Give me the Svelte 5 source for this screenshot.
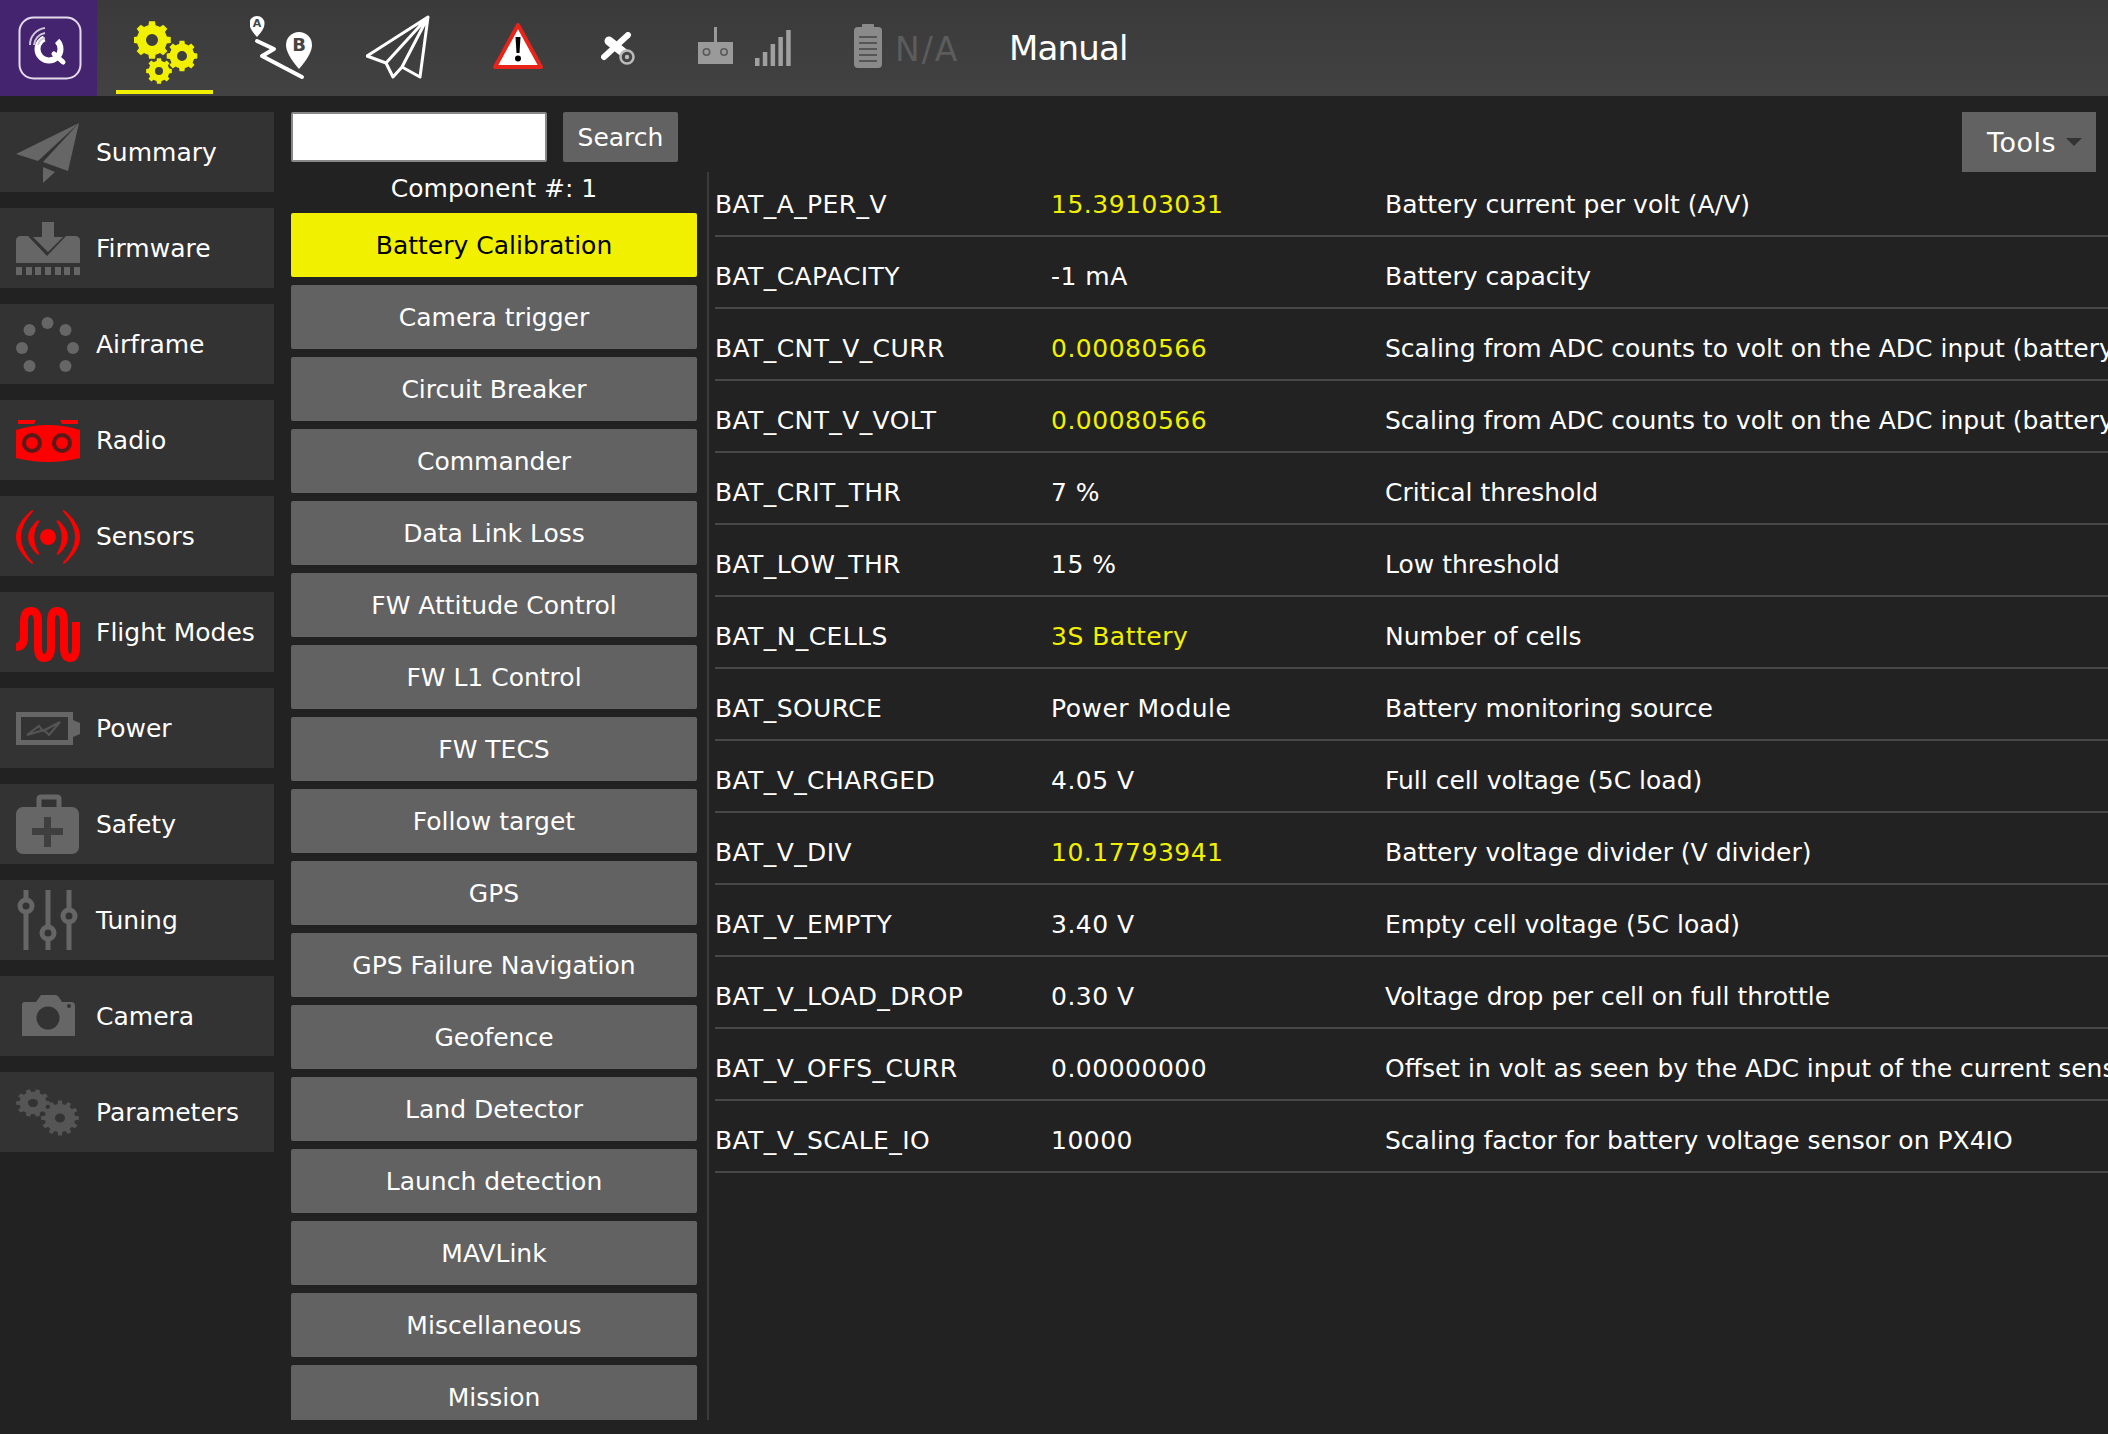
<script>
	function gear(cx, cy, r, teeth, hole) {
		const inner = r * 0.8;
		const step = (Math.PI * 2) / teeth;
		let d = '';
		for (let i = 0; i < teeth; i++) {
			const a = i * step;
			const pts = [
				[inner, a - step * 0.5],
				[inner, a - step * 0.3],
				[r, a - step * 0.2],
				[r, a + step * 0.2],
				[inner, a + step * 0.3]
			];
			for (const [rad, t] of pts) {
				d += `${d ? 'L' : 'M'}${(cx + rad * Math.cos(t)).toFixed(2)},${(cy + rad * Math.sin(t)).toFixed(2)}`;
			}
		}
		d += 'Z';
		const h = hole;
		d += `M${cx - h},${cy}a${h},${h} 0 1,0 ${h * 2},0a${h},${h} 0 1,0 ${-h * 2},0Z`;
		return d;
	}

	const nav = [
		{ label: 'Summary', icon: 'plane' },
		{ label: 'Firmware', icon: 'firmware' },
		{ label: 'Airframe', icon: 'airframe' },
		{ label: 'Radio', icon: 'radio' },
		{ label: 'Sensors', icon: 'sensors' },
		{ label: 'Flight Modes', icon: 'modes' },
		{ label: 'Power', icon: 'power' },
		{ label: 'Safety', icon: 'safety' },
		{ label: 'Tuning', icon: 'tuning' },
		{ label: 'Camera', icon: 'camera' },
		{ label: 'Parameters', icon: 'params' }
	];

	const groups = [
		'Battery Calibration',
		'Camera trigger',
		'Circuit Breaker',
		'Commander',
		'Data Link Loss',
		'FW Attitude Control',
		'FW L1 Control',
		'FW TECS',
		'Follow target',
		'GPS',
		'GPS Failure Navigation',
		'Geofence',
		'Land Detector',
		'Launch detection',
		'MAVLink',
		'Miscellaneous',
		'Mission'
	];

	const params = [
		{ name: 'BAT_A_PER_V', value: '15.39103031', changed: true, desc: 'Battery current per volt (A/V)' },
		{ name: 'BAT_CAPACITY', value: '-1 mA', desc: 'Battery capacity' },
		{ name: 'BAT_CNT_V_CURR', value: '0.00080566', changed: true, desc: 'Scaling from ADC counts to volt on the ADC input (battery current)' },
		{ name: 'BAT_CNT_V_VOLT', value: '0.00080566', changed: true, desc: 'Scaling from ADC counts to volt on the ADC input (battery voltage)' },
		{ name: 'BAT_CRIT_THR', value: '7 %', desc: 'Critical threshold' },
		{ name: 'BAT_LOW_THR', value: '15 %', desc: 'Low threshold' },
		{ name: 'BAT_N_CELLS', value: '3S Battery', changed: true, desc: 'Number of cells' },
		{ name: 'BAT_SOURCE', value: 'Power Module', desc: 'Battery monitoring source' },
		{ name: 'BAT_V_CHARGED', value: '4.05 V', desc: 'Full cell voltage (5C load)' },
		{ name: 'BAT_V_DIV', value: '10.17793941', changed: true, desc: 'Battery voltage divider (V divider)' },
		{ name: 'BAT_V_EMPTY', value: '3.40 V', desc: 'Empty cell voltage (5C load)' },
		{ name: 'BAT_V_LOAD_DROP', value: '0.30 V', desc: 'Voltage drop per cell on full throttle' },
		{ name: 'BAT_V_OFFS_CURR', value: '0.00000000', desc: 'Offset in volt as seen by the ADC input of the current sensor' },
		{ name: 'BAT_V_SCALE_IO', value: '10000', desc: 'Scaling factor for battery voltage sensor on PX4IO' }
	];
</script>

<div class="app">
	<header class="toolbar">
		<div class="logo">
			<svg width="64" height="64" viewBox="0 0 64 64">
				<rect x="1.5" y="1.5" width="61" height="61" rx="14" fill="none" stroke="#e4dcee" stroke-width="2" />
				<circle cx="31" cy="33" r="11.5" fill="none" stroke="#fff" stroke-width="6" stroke-dasharray="58 14" transform="rotate(-45 31 33)" />
				<path d="M36,38 L45,46" stroke="#fff" stroke-width="5" stroke-linecap="round" />
				<path d="M12,29 A17,17 0 0 1 27,12 M16,29 A13,13 0 0 1 27,17 M20,29 A9,9 0 0 1 27,22" fill="none" stroke="#cfc6da" stroke-width="2" />
			</svg>
		</div>

		<button class="tab active" aria-label="Vehicle setup">
			<svg width="64" height="64" viewBox="0 0 64 64">
				<path fill-rule="evenodd" fill="#f0f000" d={gear(18, 19, 19, 8, 6)} />
				<path fill-rule="evenodd" fill="#f0f000" d={gear(48, 35, 15.5, 8, 5)} />
				<path fill-rule="evenodd" fill="#f0f000" d={gear(25, 50, 13, 8, 4)} />
			</svg>
		</button>

		<svg class="route" width="64" height="66" viewBox="0 0 64 66">
			<path fill="#fff" d="M7,1 a7.5,7.5 0 0 1 7.5,8 q0,5 -7.5,13 q-7.5,-8 -7.5,-13 a7.5,7.5 0 0 1 7.5,-8Z" />
			<text x="7" y="12" class="pin-small">A</text>
			<path fill="#fff" d="M49,17 a13,13 0 0 1 13,13 q0,9 -13,24 q-13,-15 -13,-24 a13,13 0 0 1 13,-13Z" />
			<text x="49" y="36" class="pin-big">B</text>
			<path d="M7,26 L24,34 L12,41 L52,62" fill="none" stroke="#fff" stroke-width="4" stroke-linecap="round" stroke-linejoin="round" />
		</svg>

		<svg class="paper" width="64" height="66" viewBox="0 0 64 66">
			<path d="M62,2 L1,41 L20,48 L27,62 L36,52 L54,62 Z M20,48 L62,2 M36,52 L62,2" fill="none" stroke="#fff" stroke-width="3" stroke-linejoin="round" />
		</svg>

		<svg class="warn" width="52" height="48" viewBox="0 0 52 48">
			<path d="M26,3 L49,45 H3 Z" fill="#fff" stroke="#e8241a" stroke-width="4" stroke-linejoin="round" />
			<path d="M23.5,15 H28.5 L27.5,31 H24.5 Z" fill="#000" />
			<circle cx="26" cy="36.5" r="3" fill="#000" />
		</svg>

		<svg class="sat" width="36" height="36" viewBox="0 0 36 36">
			<path d="M3,25 L27,3" stroke="#fff" stroke-width="6" stroke-linecap="round" />
			<path d="M8,9 L23,21" stroke="#fff" stroke-width="9" stroke-linecap="round" />
			<circle cx="26" cy="25" r="6.5" fill="#444" stroke="#bbb" stroke-width="2.5" />
			<circle cx="26" cy="25" r="2.2" fill="#bbb" />
		</svg>

		<svg class="rc" width="35" height="37" viewBox="0 0 35 37">
			<rect x="16" y="0" width="3" height="15" fill="#9a9a9a" />
			<rect x="0" y="15" width="35" height="22" fill="#9a9a9a" />
			<circle cx="8.5" cy="25" r="3.2" fill="none" stroke="#5a5a5a" stroke-width="1.6" />
			<circle cx="26" cy="25" r="3.2" fill="none" stroke="#5a5a5a" stroke-width="1.6" />
		</svg>

		<svg class="signal" width="37" height="36" viewBox="0 0 37 36">
			<rect x="0" y="28" width="4.5" height="8" fill="#a0a0a0" />
			<rect x="7.8" y="22" width="4.5" height="14" fill="#a0a0a0" />
			<rect x="15.6" y="14" width="4.5" height="22" fill="#a0a0a0" />
			<rect x="23.4" y="7" width="4.5" height="29" fill="#a0a0a0" />
			<rect x="31.2" y="0" width="4.5" height="36" fill="#a0a0a0" />
		</svg>

		<svg class="battery" width="28" height="44" viewBox="0 0 28 44">
			<rect x="8" y="0" width="12" height="5" rx="1" fill="#8a8a8a" />
			<rect x="0" y="3" width="28" height="41" rx="4" fill="#8a8a8a" />
			<path d="M5,13 H23 M5,19 H23 M5,25 H23 M5,31 H23 M5,37 H23" stroke="#555" stroke-width="2" />
		</svg>
		<span class="na">N/A</span>
		<span class="mode">Manual</span>
	</header>

	<div class="body">
		<nav class="sidebar">
			{#each nav as item}
				<div class="nav-item">
					<svg class="nav-icon" width="64" height="64" viewBox="0 0 64 64">
						{#if item.icon === 'plane'}
							<g fill="#666">
								<path d="M0,34 L63,3 L22,41 Z" />
								<path d="M27,42 L63,3 L52,51 Z" />
								<path d="M27,47 L39,52 L27,63 Z" />
							</g>
						{:else if item.icon === 'firmware'}
							<g fill="#666">
								<path d="M0,25 Q0,20 5,20 H12 L31,40 L50,20 H59 Q64,20 64,25 V47 H0 Z" />
								<path d="M26,6 H38 V21 H47 L32,36 L17,21 H26 Z" />
								<path d="M0,51 H6 V59 H0 Z M10,51 H16 V59 H10 Z M19,51 H25 V59 H19 Z M29,51 H35 V59 H29 Z M39,51 H45 V59 H39 Z M48,51 H54 V59 H48 Z M58,51 H64 V59 H58 Z" />
							</g>
						{:else if item.icon === 'airframe'}
							<g fill="#666">
								<circle cx="31.5" cy="11" r="6" />
								<circle cx="13.5" cy="18" r="6" />
								<circle cx="49.5" cy="18" r="6" />
								<circle cx="6" cy="36" r="6" />
								<circle cx="57" cy="36" r="6" />
								<circle cx="13.5" cy="54" r="6" />
								<circle cx="49.5" cy="54" r="6" />
							</g>
						{:else if item.icon === 'radio'}
							<path fill="#f00" d="M2,12 H20 L18,16 H2 Z M44,12 H62 V16 H46 Z" />
							<path fill="#f00" d="M0,22 Q32,12 64,22 V50 Q32,58 0,50 Z" />
							<circle cx="16" cy="35" r="8" fill="none" stroke="#5a1a1a" stroke-width="4" />
							<circle cx="46" cy="35" r="8" fill="none" stroke="#5a1a1a" stroke-width="4" />
							<circle cx="16" cy="35" r="2" fill="#f00" />
							<circle cx="46" cy="35" r="2" fill="#f00" />
						{:else if item.icon === 'sensors'}
							<g fill="#f00">
								<circle cx="32" cy="33" r="8" />
								<path d="M16,6 Q-16,33 16,60 L17.5,59 Q-7.5,33 17.5,7 Z" />
								<path d="M22,16 Q2,33 22,51 L23.5,50 Q13,33 23.5,17 Z" />
								<path d="M48,6 Q80,33 48,60 L46.5,59 Q71.5,33 46.5,7 Z" />
								<path d="M42,16 Q62,33 42,51 L40.5,50 Q51,33 40.5,17 Z" />
							</g>
						{:else if item.icon === 'modes'}
							<path fill="none" stroke="#f00" stroke-width="8" d="M0,47 Q8,47 8,36 V22 Q8,11 15,11 Q22,11 22,22 V47 Q22,58 28,58 Q35,58 35,47 V22 Q35,11 41,11 Q48,11 48,22 V47 Q48,58 54,58 Q60,58 60,47 V22" />
						{:else if item.icon === 'power'}
							<path fill="none" stroke="#666" stroke-width="5" d="M2.5,18.5 H54.5 V46.5 H2.5 Z" />
							<path fill="#666" d="M57,24 L64,27 V38 L57,41 Z" />
							<path fill="none" stroke="#555" stroke-width="2" d="M11,39 L23,30 L27,35 L44,26 L33,39 L28,34 Z" />
						{:else if item.icon === 'safety'}
							<path fill="none" stroke="#666" stroke-width="5" d="M23,16 V7 Q23,5 25,5 H41 Q43,5 43,7 V16" />
							<rect x="0" y="15" width="63" height="47" rx="7" fill="#666" />
							<path d="M28,25 H35 V36 H47 V43 H35 V55 H28 V43 H16 V36 H28 Z" fill="#3f3f3f" />
						{:else if item.icon === 'tuning'}
							<g stroke="#666" stroke-width="5" fill="none">
								<path d="M10,2 V62 M32,2 V62 M53,2 V62" />
								<circle cx="10" cy="18" r="6" fill="#333" />
								<circle cx="32" cy="45" r="6" fill="#333" />
								<circle cx="53" cy="28" r="6" fill="#333" />
							</g>
						{:else if item.icon === 'camera'}
							<path fill="#666" d="M8,18 H20 L25,11 H39 Q42,11 44,15 L46,18 H55 Q59,18 59,22 V52 H6 V22 Q6,18 8,18 Z" />
							<circle cx="32" cy="34" r="11.5" fill="#333" />
							<circle cx="53" cy="22" r="2" fill="#333" />
						{:else if item.icon === 'params'}
							<g transform="translate(17 23) scale(1 0.82)">
								<path fill-rule="evenodd" fill="#555" d={gear(0, 0, 17, 10, 5)} />
							</g>
							<g transform="translate(44 38) scale(1 0.92)">
								<path fill-rule="evenodd" fill="#555" d={gear(0, 0, 19, 12, 5)} />
							</g>
						{/if}
					</svg>
					<span>{item.label}</span>
				</div>
			{/each}
		</nav>

		<section class="groups">
			<div class="search">
				<input type="text" aria-label="Search" />
				<button class="search-btn">Search</button>
			</div>
			<div class="split">
				<div class="group-col">
					<div class="component">Component #: 1</div>
					<div class="group-list">
						{#each groups as g, i}
							<button class="group" class:selected={i === 0}>{g}</button>
						{/each}
					</div>
				</div>
			</div>
		</section>

		<section class="params">
			<div class="tools-bar">
				<button class="tools">Tools<span class="caret"></span></button>
			</div>
			<div class="rows">
				{#each params as p}
					<div class="row">
						<span class="name">{p.name}</span>
						<span class="value" class:changed={p.changed}>{p.value}</span>
						<span class="desc">{p.desc}</span>
					</div>
				{/each}
			</div>
		</section>
	</div>
</div>

<style>
	:global(body) {
		margin: 0;
		background: #222;
		overflow: hidden;
	}

	.app {
		width: 2108px;
		height: 1434px;
		overflow: hidden;
		background: #222;
		color: #fff;
		font-family: 'DejaVu Sans', sans-serif;
		font-size: 25px;
	}

	.toolbar {
		display: flex;
		align-items: flex-start;
		height: 96px;
		background: linear-gradient(#3a3a3a, #424242);
	}

	.toolbar svg {
		display: block;
		flex: none;
	}

	.pin-small {
		font-size: 11px;
		font-weight: 700;
		text-anchor: middle;
		fill: #444;
	}

	.pin-big {
		font-size: 18px;
		font-weight: 700;
		text-anchor: middle;
		fill: #444;
	}

	.logo {
		width: 97px;
		height: 96px;
		padding: 16px 0 0 18px;
		box-sizing: border-box;
		background: #44246f;
	}

	.tab {
		width: 97px;
		height: 94px;
		margin-left: 19px;
		padding: 15px 0 0 18px;
		box-sizing: border-box;
		background: none;
		border: 0;
		border-bottom: 4px solid #f0f000;
		flex: none;
	}

	.route {
		margin: 15px 0 0 37px;
	}

	.paper {
		margin: 15px 0 0 52px;
	}

	.warn {
		margin: 22px 0 0 62px;
	}

	.sat {
		margin: 32px 0 0 57px;
	}

	.rc {
		margin: 27px 0 0 61px;
	}

	.signal {
		margin: 30px 0 0 22px;
	}

	.battery {
		margin: 24px 0 0 62px;
	}

	.na {
		width: 63px;
		margin: 30px 0 0 13px;
		font-size: 33px;
		line-height: 40px;
		letter-spacing: 2px;
		color: #5c5c5c;
		white-space: nowrap;
	}

	.mode {
		margin: 28px 0 0 51px;
		font-size: 34px;
		line-height: 40px;
		letter-spacing: -0.8px;
		color: #fff;
	}

	.body {
		display: flex;
		height: 1338px;
	}

	.sidebar {
		width: 274px;
		flex: none;
		padding-top: 16px;
		display: flex;
		flex-direction: column;
		gap: 16px;
	}

	.nav-item {
		display: flex;
		align-items: center;
		height: 80px;
		padding-left: 16px;
		background: #333;
	}

	.nav-item span {
		padding-top: 1px;
	}

	.nav-icon {
		display: block;
		flex: none;
		margin-right: 16px;
	}

	.groups {
		width: 424px;
		flex: none;
		margin-left: 17px;
		padding-top: 16px;
	}

	.search {
		display: flex;
		gap: 16px;
		height: 50px;
	}

	.search input {
		width: 256px;
		height: 50px;
		padding: 0;
		box-sizing: border-box;
		background: #fff;
		border: 2px solid #888;
		border-radius: 2px;
	}

	.search-btn {
		width: 115px;
		height: 50px;
		padding: 1px 0 0;
		border: 0;
		border-radius: 2px;
		background: #626262;
		color: #fff;
		font: inherit;
	}

	.split {
		display: flex;
		margin-top: 10px;
		height: 1248px;
		border-right: 2px solid #3a3a3a;
		width: 416px;
	}

	.group-col {
		width: 406px;
	}

	.component {
		height: 41px;
		line-height: 34px;
		text-align: center;
	}

	.group-list {
		display: flex;
		flex-direction: column;
		gap: 8px;
		height: 1207px;
		overflow: hidden;
	}

	.group {
		height: 64px;
		flex: none;
		padding: 1px 0 0;
		border: 0;
		border-radius: 2px;
		background: #626262;
		color: #fff;
		font: inherit;
	}

	.group.selected {
		background: #f0f000;
		color: #000;
	}

	.params {
		flex: 1;
		min-width: 0;
		padding-top: 16px;
		overflow: hidden;
	}

	.tools-bar {
		display: flex;
		justify-content: flex-end;
		padding-right: 12px;
		height: 60px;
	}

	.tools {
		display: flex;
		align-items: center;
		width: 134px;
		height: 60px;
		padding: 0 0 0 25px;
		border: 0;
		background: #626262;
		color: #fff;
		font-family: inherit;
		font-size: 27px;
		letter-spacing: 0.5px;
	}

	.caret {
		margin-left: 10px;
		width: 0;
		height: 0;
		border-left: 8px solid transparent;
		border-right: 8px solid transparent;
		border-top: 8px solid #333;
	}

	.rows {
		margin-top: -7px;
	}

	.row {
		display: flex;
		align-items: center;
		box-sizing: border-box;
		height: 72px;
		padding-top: 9px;
		border-bottom: 2px solid #484848;
		white-space: nowrap;
	}

	.name {
		width: 336px;
		flex: none;
		letter-spacing: 0.4px;
	}

	.value {
		width: 334px;
		flex: none;
		letter-spacing: 0.5px;
	}

	.value.changed {
		color: #f0f000;
	}
</style>
